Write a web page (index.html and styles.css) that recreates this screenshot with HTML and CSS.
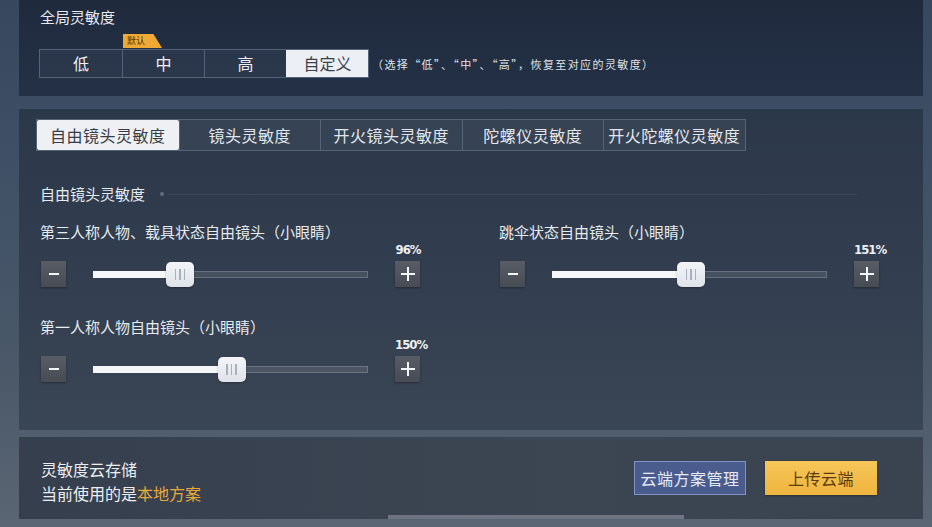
FILE: index.html
```html
<!DOCTYPE html>
<html lang="zh-CN">
<head>
    <meta charset="UTF-8">
    <title>灵敏度设置</title>
    <link rel="stylesheet" href="styles.css">
</head>
<body>
    <div class="panel panel-global">
        <div class="panel-title">全局灵敏度</div>
        <div class="preset-row">
            <div class="preset-group">
                <div class="preset">低</div>
                <div class="preset">
                    <span class="badge">默认</span>
                    中
                </div>
                <div class="preset">高</div>
                <div class="preset active">自定义</div>
            </div>
            <span class="preset-hint">（选择“低”、“中”、“高”，恢复至对应的灵敏度）</span>
        </div>
    </div>

    <div class="panel panel-main">
        <div class="tabs">
            <div class="tab active">自由镜头灵敏度</div>
            <div class="tab">镜头灵敏度</div>
            <div class="tab">开火镜头灵敏度</div>
            <div class="tab">陀螺仪灵敏度</div>
            <div class="tab">开火陀螺仪灵敏度</div>
        </div>

        <div class="section-label">
            <span>自由镜头灵敏度</span>
            <i class="section-dot"></i>
            <i class="section-line"></i>
        </div>

        <div class="slider-grid">
            <div class="slider-item">
                <div class="slider-label">第三人称人物、载具状态自由镜头（小眼睛）</div>
                <div class="slider-value">96%</div>
                <div class="slider-row">
                    <div class="step-btn"><svg width="12" height="12" viewBox="0 0 12 12"><rect x="1" y="5" width="10" height="2" fill="#f2f4f6"/></svg></div>
                    <div class="track">
                        <div class="track-fill" style="width: 31.5%"></div>
                        <div class="thumb" style="left: calc(31.5% - 14px)"><i></i><i></i><i></i></div>
                    </div>
                    <div class="step-btn"><svg width="14" height="14" viewBox="0 0 14 14"><rect x="0" y="6" width="14" height="2" fill="#f2f4f6"/><rect x="6" y="0" width="2" height="14" fill="#f2f4f6"/></svg></div>
                </div>
            </div>

            <div class="slider-item">
                <div class="slider-label">跳伞状态自由镜头（小眼睛）</div>
                <div class="slider-value">151%</div>
                <div class="slider-row">
                    <div class="step-btn"><svg width="12" height="12" viewBox="0 0 12 12"><rect x="1" y="5" width="10" height="2" fill="#f2f4f6"/></svg></div>
                    <div class="track">
                        <div class="track-fill" style="width: 50.5%"></div>
                        <div class="thumb" style="left: calc(50.5% - 14px)"><i></i><i></i><i></i></div>
                    </div>
                    <div class="step-btn"><svg width="14" height="14" viewBox="0 0 14 14"><rect x="0" y="6" width="14" height="2" fill="#f2f4f6"/><rect x="6" y="0" width="2" height="14" fill="#f2f4f6"/></svg></div>
                </div>
            </div>

            <div class="slider-item">
                <div class="slider-label">第一人称人物自由镜头（小眼睛）</div>
                <div class="slider-value">150%</div>
                <div class="slider-row">
                    <div class="step-btn"><svg width="12" height="12" viewBox="0 0 12 12"><rect x="1" y="5" width="10" height="2" fill="#f2f4f6"/></svg></div>
                    <div class="track">
                        <div class="track-fill" style="width: 50.4%"></div>
                        <div class="thumb" style="left: calc(50.4% - 14px)"><i></i><i></i><i></i></div>
                    </div>
                    <div class="step-btn"><svg width="14" height="14" viewBox="0 0 14 14"><rect x="0" y="6" width="14" height="2" fill="#f2f4f6"/><rect x="6" y="0" width="2" height="14" fill="#f2f4f6"/></svg></div>
                </div>
            </div>
        </div>
    </div>

    <div class="panel panel-cloud">
        <div class="cloud-info">
            <div>灵敏度云存储</div>
            <div>当前使用的是<span class="local">本地方案</span></div>
        </div>
        <div class="cloud-actions">
            <button class="btn btn-manage">云端方案管理</button>
            <button class="btn btn-upload">上传云端</button>
        </div>
    </div>
    <div class="bottom-bar"></div>
</body>
</html>
```

FILE: styles.css
```css
body {
    margin: 0;
    width: 932px;
    height: 527px;
    overflow: hidden;
    position: relative;
    font-family: "Noto Sans CJK SC", "Noto Sans", sans-serif;
    color: #e7eaee;
    background: linear-gradient(180deg, #36475e 0%, #3f5066 30%, #4a5868 70%, #5a6674 100%);
}

.panel {
    margin: 0 9px 0 19px;
}

/* global preset panel */
.panel-global {
    height: 96px;
    box-sizing: border-box;
    padding: 6px 0 0 20px;
    background: linear-gradient(180deg, #1f2a3d 0%, #243146 100%);
}

.panel-title {
    font-size: 15px;
    line-height: 22px;
    padding-left: 1px;
}

.preset-row {
    display: flex;
    align-items: center;
    margin-top: 21px;
}

.preset-group {
    display: flex;
    border: 1px solid #55637a;
}

.preset {
    position: relative;
    width: 82px;
    height: 27px;
    box-sizing: border-box;
    border-left: 1px solid #55637a;
    background: rgba(255, 255, 255, 0.04);
    font-size: 16px;
    line-height: 26px;
    text-align: center;
    color: #eef0f3;
}

.preset:first-child {
    border-left: none;
}

.preset.active {
    background: #eceff3;
    border-left-color: #eceff3;
    color: #3a414c;
}

.badge {
    position: absolute;
    left: 0;
    top: -16px;
    width: 39px;
    height: 14px;
    padding-left: 4px;
    box-sizing: border-box;
    background: #f0a935;
    clip-path: polygon(0 0, 78% 0, 100% 100%, 0 100%);
    font-size: 9px;
    line-height: 14px;
    text-align: left;
    color: #4a3308;
}

.preset-hint {
    margin-left: 3px;
    font-size: 11px;
    letter-spacing: 1.4px;
    color: #dfe3e8;
}

/* main sensitivity panel */
.panel-main {
    margin-top: 13px;
    height: 321px;
    box-sizing: border-box;
    padding: 10px 0 0 17px;
    background: linear-gradient(180deg, #2b384a 0%, #323e4f 50%, #3a4555 100%);
}

.tabs {
    display: inline-flex;
    border: 1px solid #566477;
    background: rgba(255, 255, 255, 0.05);
}

.tab {
    width: 141.5px;
    height: 30px;
    box-sizing: border-box;
    border-left: 1px solid #566477;
    font-size: 16px;
    line-height: 30px;
    text-align: center;
    letter-spacing: 0.5px;
    color: #e3e6eb;
}

.tab:first-child {
    border-left: none;
}

.tab.active {
    background: #eef0f3;
    color: #363d48;
    border-radius: 2px;
}

.section-label {
    display: flex;
    align-items: center;
    margin: 32px 66px 0 4px;
    font-size: 15px;
    line-height: 22px;
}

.section-dot {
    width: 4px;
    height: 4px;
    border-radius: 50%;
    margin-left: 15px;
    background: rgba(255, 255, 255, 0.25);
}

.section-line {
    flex: 1;
    height: 1px;
    margin-left: 4px;
    background: rgba(255, 255, 255, 0.07);
}

.slider-grid {
    display: grid;
    grid-template-columns: 380px 380px;
    column-gap: 79px;
    row-gap: 30px;
    margin: 17px 0 0 4px;
}

.slider-label {
    font-size: 15px;
    line-height: 20px;
    white-space: nowrap;
}

.slider-value {
    width: 26px;
    margin-left: auto;
    margin-right: -1px;
    text-align: center;
    font-family: "DejaVu Sans Condensed", "DejaVu Sans", sans-serif;
    font-weight: bold;
    font-size: 13px;
    line-height: 15px;
    letter-spacing: -1px;
    white-space: nowrap;
    color: #eef0f3;
}

.slider-row {
    display: flex;
    align-items: center;
    gap: 27px;
    margin-top: 4px;
    padding-left: 1px;
}

.step-btn {
    width: 25px;
    height: 26px;
    display: flex;
    align-items: center;
    justify-content: center;
    background: linear-gradient(180deg, #575c65 0%, #464b54 100%);
    box-shadow: 0 1px 2px rgba(0, 0, 0, 0.35);
}

.track {
    position: relative;
    flex: 1;
    height: 7px;
    box-sizing: border-box;
    border: 1px solid rgba(255, 255, 255, 0.18);
    background: rgba(255, 255, 255, 0.1);
}

.track-fill {
    position: absolute;
    left: -1px;
    top: -1px;
    bottom: -1px;
    background: #f4f6f8;
}

.thumb {
    position: absolute;
    top: -10px;
    width: 28px;
    height: 25px;
    display: flex;
    align-items: center;
    justify-content: center;
    gap: 3px;
    border-radius: 5px;
    background: linear-gradient(180deg, #f3f5f8 0%, #dfe3e9 100%);
    box-shadow: 0 1px 2px rgba(0, 0, 0, 0.3);
}

.thumb i {
    width: 1.5px;
    height: 11px;
    background: #a9b0ba;
}

/* cloud storage panel */
.panel-cloud {
    margin-top: 7px;
    height: 82px;
    box-sizing: border-box;
    padding: 20px 46px 0 22px;
    display: flex;
    justify-content: space-between;
    align-items: flex-start;
    background: linear-gradient(90deg, #363f4d 0%, #3c4552 60%, #3a4350 100%);
}

.cloud-info {
    font-size: 16px;
    line-height: 24px;
    color: #eceef1;
}

.local {
    color: #e8a93c;
}

.cloud-actions {
    display: flex;
    gap: 19px;
    margin-top: 4px;
}

.btn {
    width: 112px;
    height: 34px;
    padding: 0;
    white-space: nowrap;
    font-family: "Noto Sans CJK SC", sans-serif;
    font-size: 16px;
    letter-spacing: 0.5px;
    cursor: pointer;
}

.btn-manage {
    border: 1px solid #7f93c4;
    background: #4a5c8e;
    color: #e6eaf3;
}

.btn-upload {
    border: none;
    background: linear-gradient(180deg, #f6c659 0%, #efb43e 100%);
    color: #5a3a0e;
    box-shadow: 0 1px 2px rgba(0, 0, 0, 0.3);
}

.bottom-bar {
    position: absolute;
    left: 388px;
    top: 515px;
    width: 296px;
    height: 4px;
    background: rgba(200, 208, 218, 0.35);
}
```
